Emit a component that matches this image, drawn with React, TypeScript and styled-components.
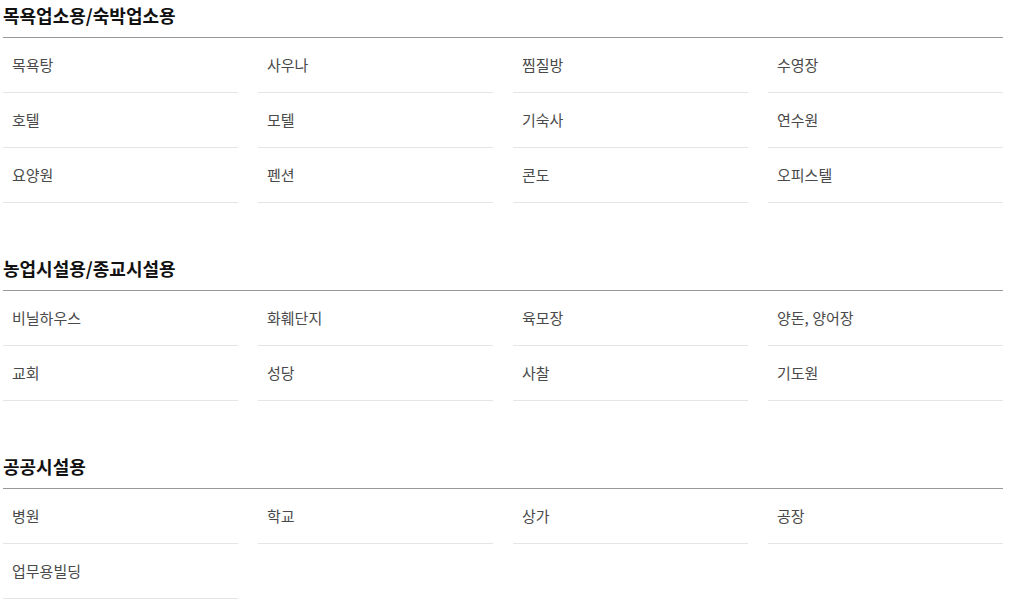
import React from "react";
import styled, { createGlobalStyle } from "styled-components";

const GlobalStyle = createGlobalStyle`
  body {
    margin: 0;
    background: #fff;
    font-family: "Noto Sans CJK KR", "Noto Sans", sans-serif;
  }
`;

const Page = styled.div`
  width: 1000px;
  padding: 0 3px;
  display: flex;
  flex-direction: column;
  gap: 50px;
`;

const Section = styled.section`
  display: flex;
  flex-direction: column;
`;

const Title = styled.h2`
  margin: 0;
  height: 37px;
  line-height: 30px;
  font-size: 18px;
  font-weight: 700;
  color: #111;
  border-bottom: 1px solid #999;
`;

const Grid = styled.ul`
  margin: 0;
  padding: 0;
  list-style: none;
  display: grid;
  grid-template-columns: repeat(4, 1fr);
  column-gap: 20px;
`;

const Cell = styled.li`
  height: 54px;
  line-height: 54px;
  padding-left: 9px;
  font-size: 15px;
  color: #4a4a4a;
  border-bottom: 1px solid #e5e5e5;
`;

const groups: { title: string; items: string[] }[] = [
  {
    title: "목욕업소용/숙박업소용",
    items: [
      "목욕탕",
      "사우나",
      "찜질방",
      "수영장",
      "호텔",
      "모텔",
      "기숙사",
      "연수원",
      "요양원",
      "펜션",
      "콘도",
      "오피스텔",
    ],
  },
  {
    title: "농업시설용/종교시설용",
    items: [
      "비닐하우스",
      "화훼단지",
      "육모장",
      "양돈, 양어장",
      "교회",
      "성당",
      "사찰",
      "기도원",
    ],
  },
  {
    title: "공공시설용",
    items: ["병원", "학교", "상가", "공장", "업무용빌딩"],
  },
];

export default function App() {
  return (
    <>
      <GlobalStyle />
      <Page>
        {groups.map((g) => (
          <Section key={g.title}>
            <Title>{g.title}</Title>
            <Grid>
              {g.items.map((item) => (
                <Cell key={item}>{item}</Cell>
              ))}
            </Grid>
          </Section>
        ))}
      </Page>
    </>
  );
}
